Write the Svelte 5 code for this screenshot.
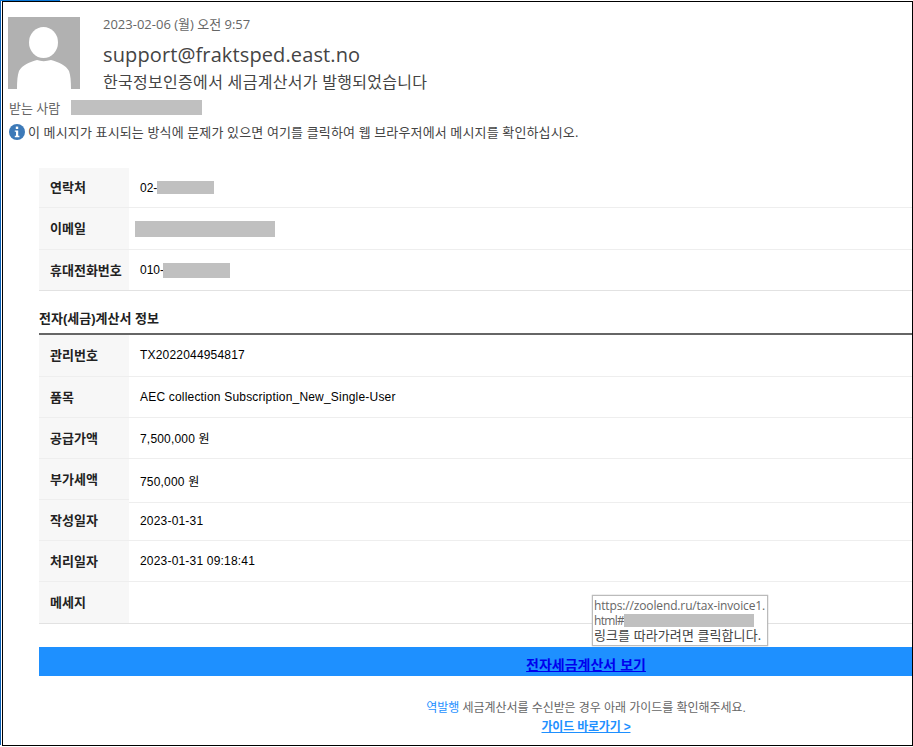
<script>
  const contact = [
    { label: '연락처', prefix: '02-', mask: 57, h: 13 },
    { label: '이메일', prefix: '', mask: 140, h: 16 },
    { label: '휴대전화번호', prefix: '010-', mask: 67, h: 15 }
  ];
  const invoice = [
    ['관리번호', 'TX2022044954817'],
    ['품목', 'AEC collection Subscription_New_Single-User'],
    ['공급가액', '7,500,000 원'],
    ['부가세액', '750,000 원'],
    ['작성일자', '2023-01-31'],
    ['처리일자', '2023-01-31 09:18:41'],
    ['메세지', '']
  ];
</script>

<div class="window">
  <header class="head">
    <div class="top">
      <svg class="avatar" viewBox="0 0 72 72" width="72" height="72">
        <rect width="72" height="72" fill="#b1b1b1" />
        <ellipse cx="35.5" cy="25.5" rx="14.5" ry="15.5" fill="#fff" />
        <path d="M9 72 C9 64 9.5 58 11 54 C14 48 22 45 29 43 C33 44.5 38 44.5 43 43 C50 45 58 48 61 54 C62.5 58 63 64 63 72 Z" fill="#fff" />
      </svg>
      <div class="meta">
        <div class="date">2023-02-06 (월) 오전 9:57</div>
        <div class="sender">support@fraktsped.east.no</div>
        <div class="subject">한국정보인증에서 세금계산서가 발행되었습니다</div>
      </div>
    </div>
    <div class="to">
      <span>받는 사람</span>
      <span class="mask to-mask"></span>
    </div>
    <div class="notice">
      <svg viewBox="0 0 16 16" width="16" height="16">
        <circle cx="8" cy="8" r="8" fill="#3d7ab8" />
        <rect x="6.8" y="2.6" width="2.4" height="2.4" fill="#fff" />
        <path d="M5.8 6.4 H9.2 V11.8 H10.4 V13.2 H5.8 V11.8 H7 V7.8 H5.8 Z" fill="#fff" />
      </svg>
      <span>이 메시지가 표시되는 방식에 문제가 있으면 여기를 클릭하여 웹 브라우저에서 메시지를 확인하십시오.</span>
    </div>
  </header>

  <main class="body">
    <section class="table contact">
      {#each contact as row}
        <div class="row">
          <div class="th">{row.label}</div>
          <div class="td">
            {row.prefix}<span class="mask" class:email={!row.prefix} class:phone={row.prefix === '010-'} style="width:{row.mask}px;height:{row.h}px"></span>
          </div>
        </div>
      {/each}
    </section>

    <h2>전자(세금)계산서 정보</h2>

    <section class="table invoice">
      {#each invoice as [label, value]}
        <div class="row">
          <div class="th">{label}</div>
          <div class="td">{value}</div>
        </div>
      {/each}
      <div class="tooltip">
        <div>https://zoolend.ru/tax-invoice1.</div>
        <div><span class="tip-html">html#</span><span class="mask tip-mask"></span></div>
        <div class="tip-ko">링크를 따라가려면 클릭합니다.</div>
      </div>
    </section>

    <div class="cta"><a href="#view">전자세금계산서 보기</a></div>

    <p class="guide"><span class="accent">역발행</span> 세금계산서를 수신받은 경우 아래 가이드를 확인해주세요.</p>
    <p class="guide-link"><a href="#guide">가이드 바로가기 &gt;</a></p>
  </main>

  <div class="frame"></div>
  <div class="tab"></div>
</div>

<style>
  :global(body) {
    margin: 0;
    background: #fff;
  }

  .window {
    position: relative;
    box-sizing: border-box;
    width: 913px;
    height: 747px;
    overflow: hidden;
    font-family: "Liberation Sans", "Noto Sans CJK KR", sans-serif;
    background: #fff;
  }

  /* screenshot's window edges sit on top of the email */
  .frame {
    position: absolute;
    left: 2px;
    top: 1px;
    width: 909px;
    height: 743px;
    border: 1px solid #000;
    pointer-events: none;
  }

  .window::before {
    content: '';
    position: absolute;
    left: 0;
    top: 0;
    bottom: 2px;
    width: 1px;
    background: #0a5fb4;
  }

  .tab {
    position: absolute;
    left: 0;
    top: 0;
    width: 60px;
    height: 1px;
    background: #0a78d7;
  }

  .head {
    padding: 17px 0 0 8px;
    color: #444;
    font-family: "Open Sans", "Noto Sans CJK KR", sans-serif;
  }

  .top {
    display: flex;
    gap: 23px;
    height: 72px;
  }

  .avatar {
    display: block;
    flex: none;
  }

  .meta {
    margin-top: -1px;
  }

  .date {
    font-size: 13px;
    line-height: 16px;
    color: #666;
  }

  .sender {
    font-size: 20px;
    letter-spacing: 0.12px;
    line-height: 27px;
    margin-top: 9px;
  }

  .subject {
    font-size: 16px;
    letter-spacing: 0.3px;
    line-height: 20px;
    margin-top: 4px;
  }

  .to {
    display: flex;
    align-items: center;
    gap: 11px;
    margin-top: 10px;
    height: 16px;
    padding-left: 1px;
    font-size: 13px;
    color: #666;
  }

  .to-mask {
    width: 131px;
    height: 15px;
  }

  .notice {
    display: flex;
    align-items: center;
    gap: 3px;
    margin-top: 9px;
    margin-left: 1px;
    font-size: 13px;
    letter-spacing: 0.14px;
    line-height: 16px;
    color: #444;
  }

  .mask {
    display: inline-block;
    background: #c0c0c0;
    vertical-align: middle;
  }

  /* the mail's table is wider than the window, so it runs off the right edge */
  .body {
    width: 1094px;
    margin-left: 39px;
    font-family: "Liberation Sans", "Noto Sans CJK KR", sans-serif;
  }

  .table {
    position: relative;
    border-bottom: 1px solid #e2e2e2;
    font-size: 12px;
    color: #000;
  }

  .contact {
    margin-top: 28px;
  }

  .row {
    display: flex;
    box-sizing: border-box;
    height: 41px;
    border-bottom: 1px solid #eee;
  }

  .contact .row:nth-child(1) {
    height: 40px;
  }

  .contact .row:nth-child(2) {
    height: 42px;
  }

  .contact .row:nth-child(3) {
    height: 40px;
    border-bottom: 0;
  }

  .invoice .row:nth-child(1) {
    height: 42px;
  }

  .invoice .row:nth-child(4) {
    height: 44px;
  }

  .invoice .row:nth-child(4) .th {
    height: 41px;
    border-bottom: 1px solid #eee;
  }

  .invoice .row:nth-child(5) {
    height: 38px;
  }

  .invoice .row:nth-child(5) .th {
    margin-top: -3px;
  }

  .invoice .row:nth-child(7) {
    border-bottom: 0;
  }

  .th {
    flex: none;
    width: 90px;
    box-sizing: border-box;
    padding: 0 0 2px 11px;
    display: flex;
    align-items: center;
    background: #f7f7f7;
    font-size: 13px;
    font-weight: 700;
    color: #222;
  }

  .td {
    padding-bottom: 1px;
    padding-left: 11px;
    display: flex;
    align-items: center;
  }

  .invoice .td {
    letter-spacing: 0.19px;
  }

  .contact .td {
    padding-bottom: 0;
  }

  .email {
    margin-left: -5px;
  }

  .phone {
    margin-left: -1px;
  }

  h2 {
    margin: 20px 0 0;
    font-size: 13px;
    line-height: 16px;
    font-weight: 700;
    color: #222;
    padding-bottom: 6px;
    border-bottom: 2px solid #666;
  }

  .tooltip {
    position: absolute;
    left: 553px;
    top: 260px;
    box-sizing: border-box;
    width: 176px;
    height: 51px;
    padding: 2px 0 0 1px;
    border: 1px solid #bbb;
    background: #fff;
    box-shadow: 0 0 1px #999;
    font-family: "Open Sans", "Noto Sans CJK KR", sans-serif;
    font-size: 12px;
    line-height: 15px;
    letter-spacing: -0.14px;
    color: #666;
    white-space: nowrap;
    z-index: 1;
  }

  .tip-html {
    letter-spacing: -0.7px;
  }

  .tip-mask {
    width: 130px;
    height: 13px;
    vertical-align: -2px;
  }

  .tip-ko {
    font-size: 13px;
    letter-spacing: 0.1px;
    color: #444;
  }

  .cta {
    margin-top: 23px;
    height: 29px;
    background: #1e90ff;
    text-align: center;
    font-size: 14px;
    line-height: 37px;
    font-weight: 700;
  }

  .cta a {
    color: #00e;
  }

  .guide {
    margin: 24px 0 0;
    text-align: center;
    font-size: 12px;
    letter-spacing: -0.06px;
    line-height: 16px;
    color: #666;
  }

  .accent {
    color: #1e90ff;
  }

  .guide-link {
    margin: 3px 0 0;
    text-align: center;
    font-size: 12px;
    letter-spacing: -0.2px;
    line-height: 16px;
    font-weight: 700;
  }

  .guide-link a {
    color: #1e90ff;
  }
</style>
